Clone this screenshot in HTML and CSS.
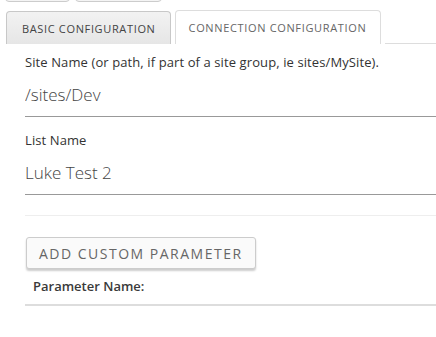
FILE: index.html
```html
<!DOCTYPE html>
<html lang="en">
<head>
    <meta charset="UTF-8">
    <title>Configuration</title>
    <link rel="stylesheet" href="styles.css">
</head>
<body>
    <div class="top-buttons">
        <button class="top-btn first"></button>
        <button class="top-btn second"></button>
    </div>

    <div class="tabs">
        <div class="tab active">BASIC CONFIGURATION</div>
        <div class="tab">CONNECTION CONFIGURATION</div>
        <div class="tab-fill"></div>
    </div>

    <div class="panel">
        <div class="field">
            <label>Site Name (or path, if part of a site group, ie sites/MySite).</label>
            <input type="text" value="/sites/Dev">
        </div>
        <div class="field">
            <label>List Name</label>
            <input type="text" value="Luke Test 2">
        </div>
        <div class="divider"></div>

        <button class="add-btn">ADD CUSTOM PARAMETER</button>
        <div class="param">
            <span>Parameter Name:</span>
        </div>
    </div>
</body>
</html>
```

FILE: styles.css
```css
* {
    margin: 0;
    padding: 0;
    box-sizing: border-box;
}

body {
    font-family: 'Open Sans', sans-serif;
    background: white;
    color: #333;
}

.top-buttons {
    display: flex;
    gap: 5px;
    padding-left: 5px;
    height: 9px;
}

.top-btn {
    height: 12px;
    border: 1px solid #ccc;
    border-radius: 0 0 4px 4px;
    background: #f4f4f4;
    margin-top: -10px;
}

.top-btn.first {
    width: 65px;
}

.top-btn.second {
    width: 87px;
}

.tabs {
    display: flex;
    align-items: flex-end;
    padding-left: 6px;
    gap: 4px;
    height: 35px;
}

.tab {
    font-size: 11px;
    color: #666;
    letter-spacing: 0.65px;
    border: 1px solid #ddd;
    border-bottom: none;
    border-radius: 4px 4px 0 0;
    background: white;
    height: 34px;
    display: flex;
    align-items: center;
    padding: 0 14px 0 13px;
}

.tab.active {
    background: linear-gradient(#f2f2f2, #e6e6e6);
    border-color: #c8c8c8;
    color: #444;
    height: 33px;
    padding: 0 14px 0 15px;
}

.tab-fill {
    flex: 1;
    border-bottom: 1px solid #ddd;
}

.panel {
    padding: 10px 0 0 25px;
}

.field {
    display: flex;
    flex-direction: column;
}

.field label {
    font-size: 13px;
    letter-spacing: 0.1px;
    color: #333;
    line-height: 16px;
}

.field input {
    font-family: inherit;
    font-size: 17px;
    font-weight: 300;
    color: #444;
    border: none;
    border-bottom: 1px solid #999;
    outline: none;
    height: 47px;
    padding: 3px 0 0;
    margin-bottom: 15px;
}

.divider {
    border-top: 1px solid #eee;
    margin-top: 5px;
}

.add-btn {
    font-family: inherit;
    font-size: 14px;
    letter-spacing: 1.5px;
    color: #666;
    background: #fafafa;
    border: 1px solid #ccc;
    border-radius: 3px;
    box-shadow: 0 2px 2px rgba(0,0,0,0.2);
    height: 32px;
    padding: 0 12px;
    margin: 21px 0 0 1px;
}

.param {
    font-size: 13px;
    font-weight: 600;
    color: #3a3a3a;
    padding: 8px 0 9px 8px;
    border-bottom: 2px solid #ddd;
}
```
